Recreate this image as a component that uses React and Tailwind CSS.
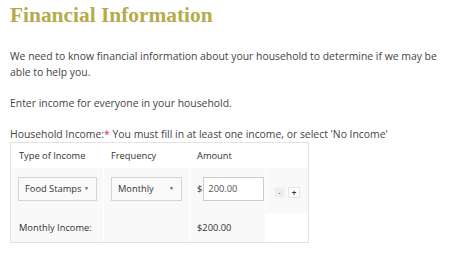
import React from 'react';

function Select({ label, width }) {
  return (
    <div
      className="flex items-center justify-between whitespace-nowrap h-[24px] border border-[#d4d4d4] bg-[#fafafa] pl-[6px] pr-[7px]"
      style={{ width }}
    >
      <span>{label}</span>
      <span className="text-[5px] text-[#555]">▼</span>
    </div>
  );
}

export default function App() {
  return (
    <div className="w-[450px] h-[264px] bg-white px-[10px] font-['Open_Sans',sans-serif] text-[10.4px] text-[#444]">
      <h1 className="font-['Liberation_Serif',serif] font-bold text-[21.4px] leading-[28px] text-[#b6ab4c] pt-[1px]">
        Financial Information
      </h1>

      <p className="mt-[19px] leading-[16px] w-[432px]">
        We need to know financial information about your household to determine if we may be able to help you.
      </p>

      <p className="mt-[15px] leading-[16px]">Enter income for everyone in your household.</p>

      <p className="mt-[15px] leading-[16px]">
        Household Income:<span className="text-[#d33]">*</span> You must fill in at least one income, or select 'No Income'
      </p>

      <div className="w-[299px] border border-[#e3e3e3] text-[9.3px] text-[#333] whitespace-nowrap">
        <div className="grid grid-cols-[92px_85px_75px_42px] gap-x-px h-[25px] items-center">
          <div className="pl-[8px]">Type of Income</div>
          <div className="pl-[7px]">Frequency</div>
          <div className="pl-[7px]">Amount</div>
          <div />
        </div>
        <div className="grid grid-cols-[92px_85px_75px_42px] h-[45px] gap-x-px">
          <div className="bg-[#f9f9f9] flex items-center pl-[7px] pb-[4px]">
            <Select label="Food Stamps" width="79px" />
          </div>
          <div className="bg-[#f9f9f9] flex items-center pl-[7px] pb-[4px]">
            <Select label="Monthly" width="71px" />
          </div>
          <div className="bg-[#f9f9f9] flex items-center pl-[7px] pb-[4px]">
            <span className="mr-[1px]">$</span>
            <div className="w-[61px] h-[24px] border border-[#ccc] bg-white flex items-center pl-[4px] text-[#555]">
              200.00
            </div>
          </div>
          <div className="bg-[#f9f9f9] flex items-center gap-[3px] pl-[8px] pt-[4px]">
            <div className="w-[11px] h-[11px] bg-[#eee] border border-[#f3f3f3] flex items-center justify-center text-[7px] leading-none">-</div>
            <div className="w-[12px] h-[11px] bg-white border border-[#e6e6e6] flex items-center justify-center text-[8px] leading-none font-bold">+</div>
          </div>
        </div>
        <div className="grid grid-cols-[92px_85px_75px_42px] h-[29px] gap-x-px">
          <div className="bg-[#f9f9f9] flex items-center pl-[8px]">Monthly Income:</div>
          <div className="bg-[#f9f9f9]" />
          <div className="bg-[#f9f9f9] flex items-center pl-[7px]">$200.00</div>
          <div className="bg-white" />
        </div>
      </div>
    </div>
  );
}
